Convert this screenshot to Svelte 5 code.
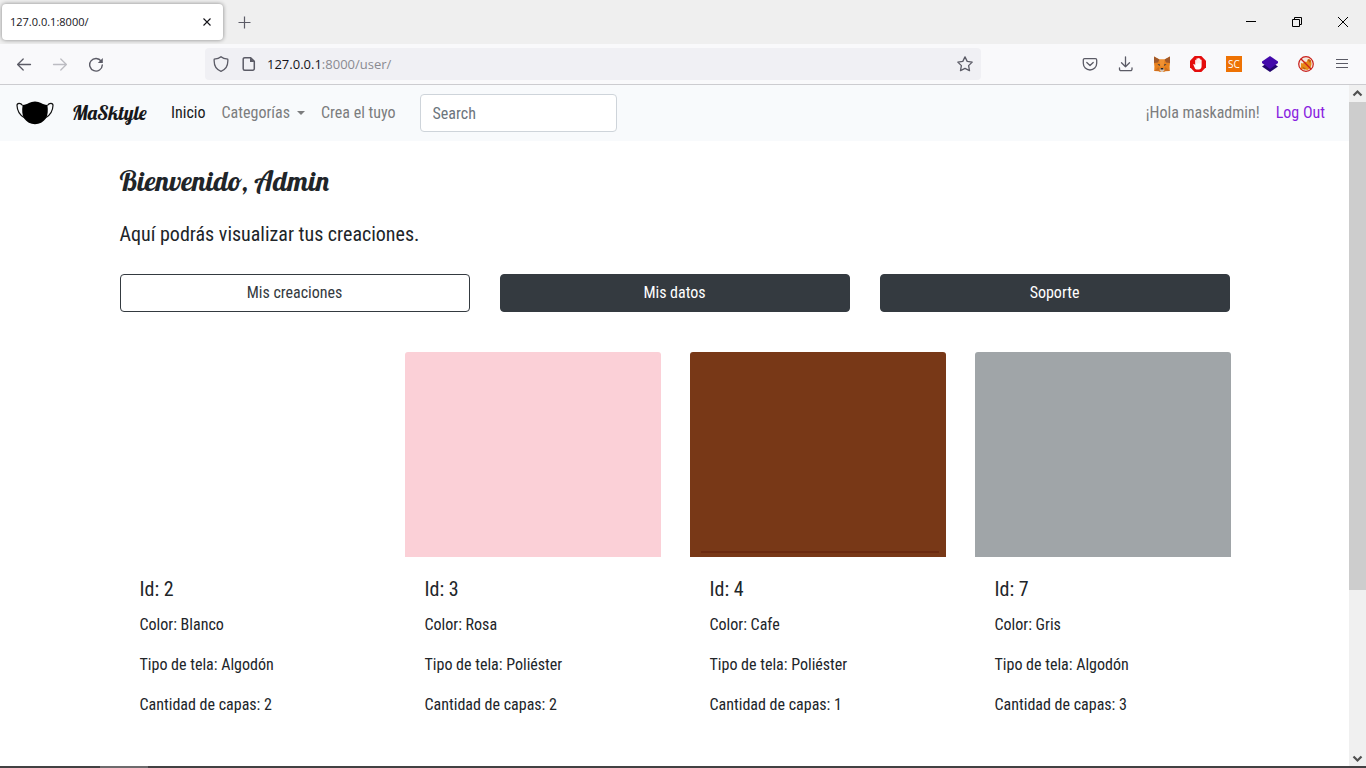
<script>
  const cards = [
    { id: 2, name: 'Blanco', cloth: 'Algodón', layers: 2, tone: 'white' },
    { id: 3, name: 'Rosa', cloth: 'Poliéster', layers: 2, tone: 'pink' },
    { id: 4, name: 'Cafe', cloth: 'Poliéster', layers: 1, tone: 'brown' },
    { id: 7, name: 'Gris', cloth: 'Algodón', layers: 3, tone: 'grey' },
  ];
</script>

<div class="window">
  <header class="tabs">
    <div class="tab">
      <span>127.0.0.1:8000/</span>
      <button class="icon" aria-label="Close tab">
        <svg width="16" height="16" viewBox="0 0 16 16"><path d="M4.500 4.500l7 7M11.500 4.500l-7 7" stroke="#15141a" stroke-width="1.100" /></svg>
      </button>
    </div>
    <button class="icon new-tab" aria-label="New tab">
      <svg width="16" height="16" viewBox="0 0 16 16"><path d="M8.500 2.500v12M2.500 8.500h12" stroke="#5b5b66" stroke-width="1.200" /></svg>
    </button>
    <div class="caption">
      <button class="icon" aria-label="Minimize"><svg width="16" height="16" viewBox="0 0 16 16"><path d="M3 7.500h10" stroke="#000" /></svg></button>
      <button class="icon" aria-label="Restore"><svg width="16" height="16" viewBox="0 0 16 16" fill="none" stroke="#000"><path d="M3.500 5.500h7v7h-7zM5.500 5.500v-2h7v7h-2" /></svg></button>
      <button class="icon" aria-label="Close"><svg width="16" height="16" viewBox="0 0 16 16"><path d="M3 3l10 10M13 3L3 13" stroke="#000" /></svg></button>
    </div>
  </header>

  <div class="toolbar">
    <div class="history">
      <button class="icon" aria-label="Back"><svg width="16" height="16" viewBox="0 0 16 16" fill="none" stroke="#5b5b66" stroke-width="1.300" stroke-linecap="round" stroke-linejoin="round"><path d="M14.500 8.500H1.600M7.200 3L1.600 8.500 7.200 14" /></svg></button>
      <button class="icon" aria-label="Forward"><svg width="16" height="16" viewBox="0 0 16 16" fill="none" stroke="#bcbcc2" stroke-width="1.300" stroke-linecap="round" stroke-linejoin="round"><path d="M1.500 8.500h12.900M8.800 3l5.600 5.500L8.800 14" /></svg></button>
      <button class="icon" aria-label="Reload"><svg width="16" height="16" viewBox="0 0 16 16" fill="none" stroke="#5b5b66" stroke-width="1.400"><path d="M13.200 5.200A6.300 6.300 0 1 0 14.300 9" stroke-linecap="round" /><path d="M14.800 2v5H9.800z" fill="#5b5b66" stroke="none" /></svg></button>
    </div>
    <div class="address">
      <svg width="16" height="16" viewBox="0 0 16 16" fill="none" stroke="#5b5b66" stroke-width="1.300" stroke-linejoin="round"><path d="M8 .8C6.500 2.200 3.800 3 1.200 3.200C.8 8.500 3 13.500 8 15.300C13 13.500 15.200 8.500 14.800 3.200C12.200 3 9.500 2.200 8 .8z" /></svg>
      <svg width="16" height="16" viewBox="0 0 16 16" fill="none" stroke="#5b5b66" stroke-width="1.500" stroke-linejoin="round"><path d="M3.700 1.700h6l3.600 3.600v7.400a1.500 1.500 0 0 1-1.500 1.500H3.700a1.500 1.500 0 0 1-1.500-1.500V3.200a1.500 1.500 0 0 1 1.500-1.500z" /><path d="M9 1.500l4.500 4.500H9z" fill="#5b5b66" stroke="none" /></svg>
      <span class="url"><b>127.0.0.1</b>:8000/user/</span>
      <button class="icon" aria-label="Bookmark"><svg width="16" height="16" viewBox="0 0 16 16" fill="none" stroke="#5b5b66" stroke-width="1.300" stroke-linejoin="round"><path d="M8 .9l2.200 4.500 5 .7-3.600 3.500.9 5L8 12.300l-4.500 2.300.9-5L.8 6.100l5-.7z" /></svg></button>
    </div>
    <div class="tools">
      <button class="icon" aria-label="Pocket"><svg width="16" height="16" viewBox="0 0 16 16" fill="none" stroke="#5b5b66" stroke-width="1.300" stroke-linecap="round" stroke-linejoin="round"><path d="M2.600 2.600h10.800a1.300 1.300 0 0 1 1.300 1.300v3.400a6.700 6.700 0 0 1-13.400 0V3.900a1.300 1.300 0 0 1 1.300-1.300z" /><path d="M4.800 6.500L8 9.500l3.200-3" /></svg></button>
      <button class="icon" aria-label="Downloads"><svg width="16" height="16" viewBox="0 0 16 16" fill="none" stroke="#5b5b66" stroke-width="1.300" stroke-linecap="round" stroke-linejoin="round"><path d="M7.500 .8v10M3.500 6.800l4 4 4-4M1.500 11.800v1.400a1.500 1.500 0 0 0 1.500 1.500h9.500a1.500 1.500 0 0 0 1.500-1.500v-1.400" /></svg></button>
      <button class="icon" aria-label="Wallet">
        <svg width="16" height="16" viewBox="0 0 16 16"><path d="M0 .5L5.500 3.500h5L16 .5V7l-.4 3.500.2 4.500-4.300.2-1.500.8H6l-1.500-.8L.2 15l.2-4.500L0 7z" fill="#e8821e" /><path d="M0 .5l5.500 3L4 6.500 0 7zM16 .5l-5.500 3L12 6.500l4 .5z" fill="#a1592a" /><path d="M5.500 3.500h5l-1 7h-3z" fill="#f09132" /><path d="M.2 15l4.300-4 1.500 4zM15.800 15l-4.300-4-1.500 4z" fill="#d0701f" /><path d="M5.500 14l1.300-2h2.400l1.300 2-1.500 2H7z" fill="#d8c5b5" /><path d="M6.800 12h2.400l.3 1.600h-3z" fill="#222" /><path d="M3.500 8l2.500.5-.5 1.500zM12.500 8L10 8.500l.5 1.500z" fill="#25344a" /></svg>
      </button>
      <button class="icon" aria-label="Content blocker">
        <svg width="16" height="16" viewBox="0 0 16 16"><path d="M4.700 0h6.600L16 4.700v6.600L11.300 16H4.700L0 11.300V4.700z" fill="#e40d0d" /><path d="M5 12.500L3.400 8.700c-.3-.8.600-1.100 1-.5l.8 1V4.500c0-.9 1.200-.9 1.200 0V3c0-.9 1.300-.9 1.300 0v-.4c0-.9 1.300-.9 1.300 0V3c0-.9 1.300-.9 1.300 0v1.200c0-.8 1.300-.8 1.300 0V10c0 2-1 3.600-3 3.600H7.400c-1.200 0-1.900-.3-2.400-1.100z" fill="#fff" /><path d="M6.400 4v3.500M7.700 3.500v4M9 3.500v4M10.300 4.500v3" stroke="#f4b0b0" stroke-width=".3" /></svg>
      </button>
      <button class="icon sc" aria-label="SC extension">SC</button>
      <button class="icon" aria-label="Layers extension">
        <svg width="16" height="16" viewBox="0 0 16 16"><path d="M0 10.500L3 8.500h10l3 2L8 16z" fill="#23056e" /><path d="M8 0l8 5.500V7l-8 6L0 7V5.500z" fill="#4309ab" /></svg>
      </button>
      <button class="icon" aria-label="Blocked fox">
        <svg width="16" height="16" viewBox="0 0 16 16"><circle cx="8" cy="8" r="7.300" fill="#f4e7df" /><path d="M3 7l2 .5L6.500 5.500l2 .5L10 3l3 1 .5 4-1 4-3 2-5-1-2 .5L3 10z" fill="#e88a17" /><path d="M9.500 4L11 3l2 2-1 2zM4 10.500l4 2-2 1z" fill="#b85b18" /><circle cx="8" cy="8" r="7.300" fill="none" stroke="#c9201c" stroke-width="1.200" /><path d="M2.800 2.800l10.400 10.400" stroke="#c9201c" stroke-width="1.300" /></svg>
      </button>
      <button class="icon" aria-label="Menu"><svg width="16" height="16" viewBox="0 0 16 16"><path d="M2 3.500h12M2 7.500h12M2 11.500h12" stroke="#5b5b66" stroke-width="1.200" /></svg></button>
    </div>
  </div>

  <div class="viewport">
    <div class="page">
      <nav class="navbar">
        <a class="logo" href="#inicio" aria-label="Inicio">
          <svg width="38" height="24" viewBox="0 0 38 24"><path d="M6.600 4C12 3.500 14 .5 19 .5S26 3.500 31.400 4c.8 5.500.5 10-1.500 13.500-2.500 3.500-6.500 5.700-10.900 5.700S10.600 21 8.100 17.500C6.100 14 5.800 9.500 6.600 4z" /><path d="M6.600 4.500C4.600 1.500 1 1.800 1 4.500c.2 4.500 2 9 7 12M31.400 4.500c2-3 5.600-2.700 5.600 0-.2 4.500-2 9-7 12" fill="none" stroke="#111" stroke-width="1.200" /></svg>
        </a>
        <a class="brand" href="#inicio">MaSktyle</a>
        <a class="link active" href="#inicio">Inicio</a>
        <a class="link caret" href="#categorias">Categorías</a>
        <a class="link" href="#crea">Crea el tuyo</a>
        <input type="search" placeholder="Search" aria-label="Search" />
        <span class="hello">¡Hola maskadmin!</span>
        <a class="link logout" href="#salir">Log Out</a>
      </nav>

      <main>
        <h1>Bienvenido, Admin</h1>
        <p class="lead">Aquí podrás visualizar tus creaciones.</p>
        <div class="actions">
          <button class="outline">Mis creaciones</button>
          <button>Mis datos</button>
          <button>Soporte</button>
        </div>
        <div class="cards">
          {#each cards as card (card.id)}
            <article>
              <div class="swatch {card.tone}"></div>
              <div class="body">
                <h2>Id: {card.id}</h2>
                <p>Color: {card.name}</p>
                <p>Tipo de tela: {card.cloth}</p>
                <p>Cantidad de capas: {card.layers}</p>
              </div>
            </article>
          {/each}
        </div>
      </main>
    </div>
    <div class="scrollbar">
      <svg width="17" height="17" viewBox="0 0 17 17" fill="none" stroke="#505050" stroke-width="2.200"><path d="M4.500 10.500l4-4 4 4" /></svg>
      <div class="track"><div class="thumb"></div></div>
      <svg width="17" height="17" viewBox="0 0 17 17" fill="none" stroke="#505050" stroke-width="2.200"><path d="M4.500 7.500l4 4 4-4" /></svg>
    </div>
  </div>
  <div class="taskbar"><div></div></div>
</div>

<style>
  :global(body) { margin: 0; }
  * { box-sizing: border-box; }
  .window {
    min-height: 100vh;
    display: flex;
    flex-direction: column;
    background: #fff;
    color: #212529;
    font: 16px/24px "Roboto Condensed", "Liberation Sans Narrow", Roboto, sans-serif;
  }
  button { font: inherit; cursor: pointer; }
  a { text-decoration: none; color: inherit; }
  svg { display: block; flex: none; }
  .icon { border: 0; padding: 0; background: none; width: 16px; height: 16px; flex: none; }

  .tabs { display: flex; align-items: center; height: 44px; padding-left: 2px; background: #efefef; }
  .tab {
    display: flex;
    align-items: center;
    justify-content: space-between;
    width: 221px;
    height: 36px;
    padding: 0 8px;
    border-radius: 4px;
    background: #fff;
    box-shadow: 0 0 4px rgba(0, 0, 0, 0.45);
    color: #15141a;
    font: 11px/16px "Open Sans", "Noto Sans", sans-serif;
  }
  .new-tab { margin-left: 13px; }
  .caption { display: flex; gap: 30px; margin-left: auto; padding-right: 15px; }

  .toolbar {
    display: flex;
    align-items: center;
    height: 41px;
    padding: 0 16px;
    background: #f9f9fb;
    border-bottom: 1px solid #ccccd0;
  }
  .history { display: flex; gap: 20px; width: 189px; }
  .address {
    display: flex;
    align-items: center;
    flex: 0 1 776px;
    height: 32px;
    padding: 0 8px;
    gap: 12px;
    border-radius: 4px;
    background: #f0f0f4;
    color: #8a8a91;
    font: 13px/20px "Open Sans", "Noto Sans", sans-serif;
  }
  .url { flex: 1; margin-left: -2px; }
  .url b { font-weight: 400; color: #15141a; }
  .tools { display: flex; gap: 20px; margin-left: auto; }
  .sc { background: #ee7203; color: #fff; font: 10px/16px "Open Sans", sans-serif; text-align: center; }

  .viewport { flex: 1; display: flex; }
  .page { flex: 1; min-width: 0; }
  .scrollbar { display: flex; flex-direction: column; width: 17px; background: #f0f0f0; }
  .track { flex: 1; }
  .thumb { height: 75.5%; background: #cdcdcd; }
  .taskbar { height: 2px; padding-left: 100px; background: #434143; }
  .taskbar div { width: 48px; height: 2px; background: #6d6b6d; }

  .navbar {
    display: flex;
    align-items: center;
    height: 56px;
    padding: 0 24px 0 16px;
    background: #f8fafc;
    color: #7c7d7e;
  }
  .brand {
    width: 99px;
    margin-left: 18px;
    color: #17181a;
    font: 20px/30px Lobster, "Liberation Serif", serif;
  }
  .link { margin-right: 16px; white-space: nowrap; }
  .active { color: #181a1b; }
  .caret { display: flex; align-items: center; gap: 7px; }
  .caret::after { content: ""; border: 4px solid transparent; border-top-color: currentColor; border-bottom: 0; }
  input {
    width: 197px;
    height: 38px;
    margin: 0 16px 0 8px;
    padding: 6px 12px;
    border: 1px solid #ced4da;
    border-radius: 4px;
    background: #fff;
    font: inherit;
    appearance: none;
  }
  input::placeholder { color: #6c757d; opacity: 1; }
  .hello { margin: 0 16px 0 auto; white-space: nowrap; }
  .logout { margin-right: 0; color: #8a1fe0; }

  main { max-width: 1140px; margin: 0 auto; padding: 24px 15px 0; }
  h1 { margin: 0; font: 28px/32px Lobster, "Liberation Serif", serif; }
  .lead { margin: 22px 0 25px; font-size: 20px; line-height: 30px; }
  .actions { display: grid; grid-template-columns: repeat(3, 1fr); gap: 30px; }
  .actions button {
    height: 38px;
    padding: 0 12px;
    border: 1px solid #343a40;
    border-radius: 4px;
    background: #343a40;
    color: #fff;
  }
  .actions .outline { background: #fff; color: #343a40; }
  .cards { display: grid; grid-template-columns: repeat(4, 1fr); gap: 29px; margin: 40px -1px 0 0; }
  .swatch { height: 205px; border-radius: 3px 3px 0 0; }
  .pink { background: #fbd0d7; }
  .brown { display: flex; align-items: flex-end; padding: 0 7px 4px 11px; background: #783817; }
  .brown::after { content: ""; flex: 1; height: 2px; background: #6b2a10; }
  .grey { background: #a0a5a8; }
  .body { padding: 20px; }
  h2 { margin: 0 0 12px; font-size: 20px; font-weight: 400; line-height: 24px; }
  .body p { margin: 0 0 16px; }
</style>
